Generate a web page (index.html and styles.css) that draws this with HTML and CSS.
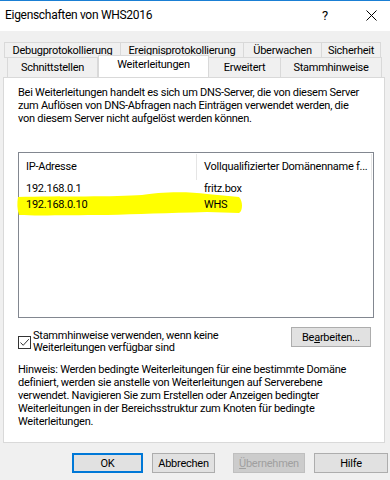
FILE: index.html
```html
<!doctype html>
<html>
<head>
	<meta charset='utf-8'>
	<title>Eigenschaften von WHS2016</title>
	<link rel="stylesheet" href="styles.css">
</head>
<body>
<div class='dlg'>
	<div class='titlebar'>
		<span class='title'>Eigenschaften von WHS2016</span>
		<span class='help'>?</span>
		<span class='close'><svg width='11' height='11' viewBox='0 0 11 11'><path d='M0.5 0.5L10.5 10.5M10.5 0.5L0.5 10.5' stroke='#000' stroke-width='1' fill='none'/></svg></span>
	</div>

	<div class='tabs'>
		<div class='tab-row row1'>
			<div class='tab w116'>Debugprotokollierung</div>
			<div class='tab w123'>Ereignisprotokollierung</div>
			<div class='tab w78'>Überwachen</div>
			<div class='tab w59'>Sicherheit</div>
		</div>
		<div class='tab-row row2'>
			<div class='tab w91'>Schnittstellen</div>
			<div class='tab w110 cur'>Weiterleitungen</div>
			<div class='tab w72'>Erweitert</div>
			<div class='tab w101'>Stammhinweise</div>
		</div>
	</div>

	<div class='panel'>
		<p class='intro'>Bei Weiterleitungen handelt es sich um DNS-Server, die von diesem Server<br>zum Auflösen von DNS-Abfragen nach Einträgen verwendet werden, die<br>von diesem Server nicht aufgelöst werden können.</p>

		<div class='listbox'>
			<svg class='marker' width='230' height='28' viewBox='0 0 230 28'><path d='M1 6 C40 5 100 6 125 4 C140 1 170 0 190 3 L222 6 C226 10 226 20 222 22 L190 21 C150 22 120 23 90 24 C50 24 20 25 2 24 C0 18 0 12 1 6 Z' fill='#ffff00'/></svg>
			<div class='lv-head'>
				<div class='col c1'>IP-Adresse</div>
				<div class='col c2'>Vollqualifizierter Domänenname f...</div>
			</div>
			<div class='lv-row'>
				<div class='col c1'>192.168.0.1</div>
				<div class='col c2'>fritz.box</div>
			</div>
			<div class='lv-row'>
				<div class='col c1'>192.168.0.10</div>
				<div class='col c2'>WHS</div>
			</div>
		</div>

		<div class='opts'>
			<label class='check'>
				<span class='box'><svg width='11' height='11' viewBox='0 0 11 11'><path d='M1.5 5.5L4.2 8.3L9.8 2.2' stroke='#333' stroke-width='1' fill='none'/></svg></span>
				<span class='lbl'>Stammhinweise verwenden, wenn keine<br>Weiterleitungen verfügbar sind</span>
			</label>
			<button class='btn edit'>Be<u>a</u>rbeiten...</button>
		</div>

		<p class='note'>Hinweis: Werden bedingte Weiterleitungen für eine bestimmte Domäne definiert, werden sie anstelle von Weiterleitungen auf Serverebene verwendet. Navigieren Sie zum Erstellen oder Anzeigen bedingter Weiterleitungen in der Bereichsstruktur zum Knoten für bedingte Weiterleitungen.</p>
	</div>

	<div class='buttons'>
		<button class='btn ok'>OK</button>
		<button class='btn cancel'>Abbrechen</button>
		<button class='btn off'><u>Ü</u>bernehmen</button>
		<button class='btn help-btn'>Hilfe</button>
	</div>
</div>
</body>
</html>
```
FILE: styles.css
```css
*{margin:0;padding:0;box-sizing:border-box;}
body{background:#f0f0f0;font-family:Roboto,"Liberation Sans",Arial,sans-serif;font-size:11px;letter-spacing:-0.25px;color:#000;}
.dlg{width:390px;height:480px;overflow:hidden;display:flex;flex-direction:column;}

.titlebar{height:31px;border-top:1px solid #1a7fd4;background:#fff;display:flex;align-items:center;padding:0 0 2px 5px;}
.title{flex:1;font-size:12px;letter-spacing:-0.3px;}
.help{width:12px;margin-right:32px;font-size:13px;}
.close{width:11px;height:11px;margin-right:13px;display:flex;}

.tabs{margin-top:11px;padding-left:4px;}
.tab-row{display:flex;}
.tab{border:1px solid #d9d9d9;background:#f0f0f0;text-align:center;white-space:nowrap;}
.tab+.tab{border-left:none;}
.row1 .tab{height:16px;line-height:15px;}
.row2{padding-left:3px;margin-top:-1px;}
.row2 .tab{height:20px;line-height:19px;border-bottom:none;}
.row2 .tab.cur{background:#fff;height:22px;margin-top:-2px;margin-bottom:-2px;line-height:17px;border-left:1px solid #d9d9d9;position:relative;z-index:1;}
.row2 .tab.cur+.tab{border-left:none;}
.w116{width:117px;}
.w123{width:123px;}
.w78{width:78px;}
.w59{width:59px;}
.w91{width:91px;}
.w110{width:111px;}
.w72{width:72px;}
.w101{width:101px;}

.panel{margin:0 5px 0 3px;height:366px;background:#fff;border:1px solid #d9d9d9;padding:8px 10px 0 14px;}
.intro{line-height:13px;white-space:nowrap;}

.listbox{position:relative;margin-top:27px;width:356px;height:166px;border:1px solid #828790;}
.marker{position:absolute;left:-2px;top:38px;}
.lv-head,.lv-row{display:flex;position:relative;}
.lv-head{height:27px;align-items:center;}
.lv-row{height:16px;align-items:center;}
.col{padding-left:7px;white-space:nowrap;}
.c1{width:178px;}
.c2{width:175px;}
.lv-head .col{height:26px;line-height:26px;border-right:1px solid #e5e5e5;}

.opts{display:flex;justify-content:space-between;margin-top:12px;padding-right:4px;}
.check{display:flex;align-items:flex-start;}
.box{width:13px;height:13px;border:1px solid #333;margin-top:6px;margin-right:2px;display:flex;align-items:center;justify-content:center;background:#fff;}
.lbl{line-height:12px;}
.btn{font-family:inherit;font-size:11px;letter-spacing:-0.25px;color:#000;background:#e1e1e1;border:1px solid #adadad;height:20px;}
.edit{width:80px;margin-top:-3px;margin-right:-1px;}
.note{line-height:13px;margin-top:9px;padding-right:4px;}

.buttons{display:flex;padding:10px 0 0 72px;}
.buttons .btn{height:20px;}
.buttons .ok{width:71px;border:2px solid #0078d7;}
.buttons .cancel{width:63px;margin-left:9px;}
.buttons .off{width:72px;margin-left:18px;color:#a0a0a0;background:#ccc;border-color:#bfbfbf;}
.buttons .help-btn{width:74px;margin-left:9px;}
```
